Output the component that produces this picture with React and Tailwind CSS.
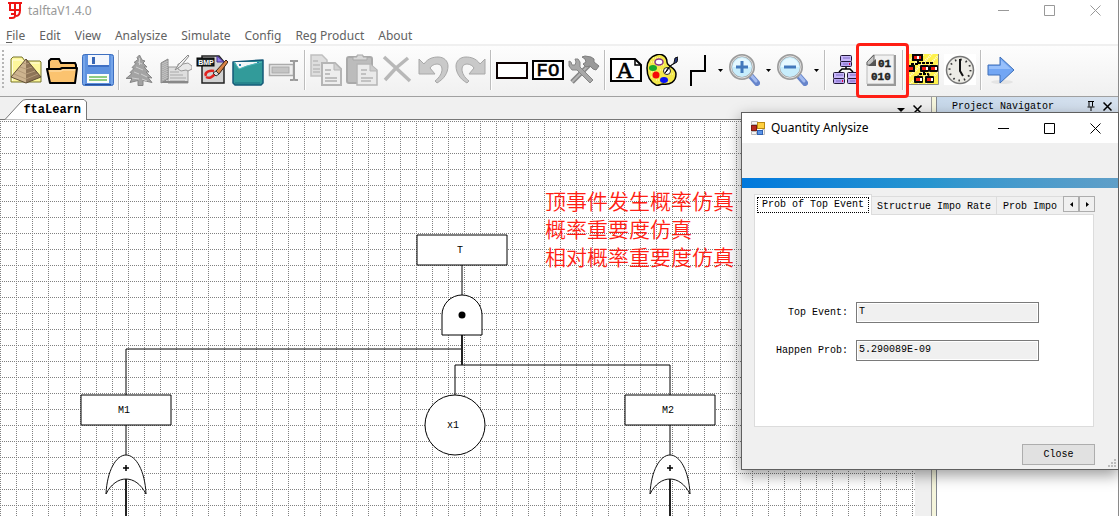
import React from "react";

const MONO = "font-['Liberation_Mono','DejaVu_Sans_Mono',monospace]";

function Icon({ children }) {
  return (
    <svg viewBox="0 0 32 32" className="block h-8 w-8 shrink-0" aria-hidden="true">
      {children}
    </svg>
  );
}

function PyramidFolder() {
  return (
    <Icon>
      <path d="M1 28V5l2-2h9l3 4h15l1 1v20z" fill="#fdf79b" stroke="#77752b" />
      <path d="M2.500 27V6h9l3 3h15" fill="none" stroke="#fffde0" />
      <path d="M16 5L1 23l15 6z" fill="#cdb48f" />
      <path d="M16 5l15 18-15 6z" fill="#8e7558" />
      <path d="M13 9l3 1 4-1M10 13l6 2 6-2M7 16l9 4 9-3M4 20l12 5 12-5" fill="none" stroke="#b49a78" />
      <path d="M16 5L1 23l15 6 15-6z" fill="none" stroke="#5f4c34" />
    </Icon>
  );
}

function OpenFolder() {
  return (
    <Icon>
      <path d="M3 14V7l2-2h8l2 4h14l1 2v4" fill="#fbc36f" stroke="#000" strokeWidth="2" />
      <path d="M1 15h13l2-1h15l-2 15H4z" fill="#fbc36f" stroke="#000" strokeWidth="2" strokeLinejoin="round" />
      <path d="M3 17h12l2-1h12" fill="none" stroke="#ffe3b3" />
    </Icon>
  );
}

function SaveDisk() {
  return (
    <Icon>
      <rect x="0.5" y="0.5" width="31" height="31" rx="2" fill="#5f93e0" stroke="#3d6fc0" />
      <path d="M2 2v28M30 2v28" stroke="#8db7f2" />
      <path d="M6 1h21v10H6z" fill="#f4f7fc" />
      <path d="M10 3h3v7h-3z" fill="#3766b5" />
      <path d="M6 11h21v2H6z" fill="#3f70c4" />
      <path d="M5 20h22v9H5z" fill="#fbfdfb" />
      <path d="M7 22h18v2H7zM7 25h18v2H7z" fill="#8fcd82" />
      <path d="M3 30h26v1H3z" fill="#274f9a" />
    </Icon>
  );
}

function PineTree() {
  return (
    <Icon>
      <path d="M15.500 1l2.500 5 3 1-2 2 4 4h-3l5 5h-3l6 6-4-.5 4 5-9-2v5h-5v-5l-8 2 2-4-6 0 6-5-2-1 4-4-2-1 4-4-2-1 4-3-1-2z" fill="#a3a3a3" stroke="#868686" strokeWidth="1" />
      <path d="M14 8l4 2M12 13l7 3M10 18l5 2M17 20l6 3M8 24l7 1M18 25l5 2M15.500 4v7" stroke="#cfcfcf" fill="none" />
    </Icon>
  );
}

function Notebook() {
  return (
    <Icon>
      <path d="M8 13h18l2 3v13H8z" fill="#dedede" stroke="#999" />
      <path d="M10 18h9M10 21h13M10 24h16M10 27h15" stroke="#a8a8a8" />
      <path d="M2 28h26" stroke="#888" strokeWidth="2" />
      <path d="M1 9l7-4v20l-7 4z" fill="#adadad" stroke="#888" />
      <path d="M3 9v18M5 8v18M7 7v18" stroke="#cfcfcf" strokeDasharray="1 1" />
      <path d="M18 10l5 0 5-1 4 3v3l-4 2-2-1-5 1-3-2z" fill="#e8e8e8" stroke="#999" />
      <path d="M15 16l4-6 9-9 1 1-8 10z" fill="#f0f0f0" stroke="#8b8b8b" />
    </Icon>
  );
}

function BitmapDoc() {
  return (
    <Icon>
      <path d="M6 2h17l5 6v21H6z" fill="#d2d2d2" stroke="#222" strokeWidth="1.500" />
      <path d="M21 2v6h7z" fill="#8f78e8" stroke="#45308d" />
      <rect x="1" y="4" width="17" height="8" fill="#1a2222" stroke="#000" />
      <text x="10" y="11" textAnchor="middle" fontSize="7" fontWeight="700" fill="#fff" fontFamily="Liberation Sans, sans-serif">BMP</text>
      <path d="M10 22c-2-4 4-6 8-5M10 23c4 2 6 0 9-3" fill="none" stroke="#e02420" strokeWidth="2.500" />
      <path d="M20 17L30 6l2 2-9 12z" fill="#d98446" stroke="#3c2112" />
      <path d="M17 19l3-2 3 3-3 2z" fill="#ddd" stroke="#333" />
    </Icon>
  );
}

function Envelope() {
  return (
    <Icon>
      <path d="M1 8l30-2v23l-2 2H3l-2-2z" fill="#329b9a" stroke="#155a78" strokeWidth="1.500" strokeLinejoin="round" />
      <path d="M3 8h26L14 12l-7 3z" fill="#f2f6f7" />
      <path d="M2 8l5 7 8-3 15-4" fill="none" stroke="#4fb6ba" />
      <path d="M7 10h2v2H7zM25 8h2v1h-2z" fill="#287fad" />
      <path d="M3 29h25" stroke="#1c6e81" />
    </Icon>
  );
}

function RenameField() {
  return (
    <Icon>
      <rect x="1.500" y="10.500" width="24" height="11" fill="#ededed" stroke="#ababab" strokeWidth="1.500" />
      <rect x="4" y="13" width="17" height="6" fill="#c4c4c4" stroke="#aaa" />
      <path d="M22 7h3l1 1 1-1h3M26 8v17M22 26h3l1-1 1 1h3" fill="none" stroke="#9c9c9c" strokeWidth="2" />
    </Icon>
  );
}

function CopyPages() {
  return (
    <Icon>
      <path d="M1 1h11l5 5v16H1z" fill="#dedede" stroke="#c0c0c0" strokeWidth="1.500" />
      <path d="M3 7h5M3 11h7M3 15h7M3 18h7" stroke="#bcbcbc" strokeWidth="1.500" />
      <path d="M12 9h13l6 6v16H12z" fill="#eee" stroke="#b5b5b5" strokeWidth="2" />
      <path d="M24 9v7h7" fill="#d2d2d2" stroke="#b5b5b5" />
      <path d="M15 16h6M15 20h5M15 24h12M15 27h12" stroke="#b0b0b0" strokeWidth="1.500" />
    </Icon>
  );
}

function PastePage() {
  return (
    <Icon>
      <rect x="1" y="3" width="25" height="26" rx="2" fill="#bcbcbc" stroke="#a9a9a9" strokeWidth="2" />
      <path d="M7 5V3h4V1h6v2h4v3H7z" fill="#d8d8d8" stroke="#a8a8a8" />
      <path d="M11 10h13l7 6v15H11z" fill="#eaeaea" stroke="#b5b5b5" strokeWidth="1.500" />
      <path d="M24 10v7h7" fill="#ccc" stroke="#b7b7b7" />
      <path d="M15 16h6M15 20h5M15 24h12M15 27h10" stroke="#b5b5b5" strokeWidth="1.500" />
    </Icon>
  );
}

function DeleteCross() {
  return (
    <Icon>
      <path d="M2 3l12 11L26 4M3 26l11-12 14 13" fill="none" stroke="#b8b8b8" strokeWidth="3.500" />
    </Icon>
  );
}

const CURVE = "M1 5l5 5C10 4 16 3 20 3c6 0 10 4 10 9 0 7-4 13-11 17l-2-2c5-4 7-8 7-12 0-3-2-5-5-5-3 0-6 2-7 4l5 6H1z";

function Undo() {
  return (
    <Icon>
      <path d={CURVE} fill="#c9c9c9" stroke="#a8a8a8" strokeLinejoin="round" />
    </Icon>
  );
}

function Redo() {
  return (
    <Icon>
      <path d={CURVE} transform="matrix(-1 0 0 1 32 0)" fill="#c9c9c9" stroke="#a8a8a8" strokeLinejoin="round" />
    </Icon>
  );
}

function BoxShape() {
  return (
    <Icon>
      <rect x="1" y="9" width="30" height="15" fill="#fff" stroke="#0b0000" strokeWidth="2" />
    </Icon>
  );
}

function FieldCode() {
  return (
    <Icon>
      <rect x="1" y="7" width="30" height="18" fill="#fff" stroke="#000" strokeWidth="2" />
      <text x="16" y="22" textAnchor="middle" fontSize="19" stroke="#000" strokeWidth="0.6" fontFamily="Liberation Mono, monospace">FO</text>
    </Icon>
  );
}

function Tools() {
  return (
    <Icon>
      <path d="M4 28L21 11" stroke="#858585" strokeWidth="5" />
      <path d="M4 28L21 11" stroke="#b5b5b5" strokeWidth="2" />
      <path d="M14 3l3-1 6 1 3 2v3l5 4-3 4-3-1-3-3-4 1-3-3 3-2-1-3z" fill="#999" stroke="#7e7e7e" />
      <path d="M1 7l2 1 1 3h3l1-3-1-3h3l2 3v5l13 13-3 3L9 16H4l-3-4z" fill="#a8a8a8" stroke="#868686" />
    </Icon>
  );
}

function TextLabel() {
  return (
    <Icon>
      <path d="M1 5h24l6 6v16H1z" fill="#fff" stroke="#000" strokeWidth="2" />
      <path d="M25 5v6h6" fill="none" stroke="#000" strokeWidth="1.500" />
      <text x="15" y="24" textAnchor="middle" fontSize="24" stroke="#000" strokeWidth="0.7" fontFamily="Liberation Serif, serif">A</text>
    </Icon>
  );
}

function Palette() {
  return (
    <Icon>
      <path d="M10 1c5-2 11 1 11 7 0 5 9 5 9 12 0 8-6 11-13 10-3 0-4 2-7 1C4 28 1 21 1 14S4 3 10 1z" fill="#f3e84b" stroke="#000" strokeWidth="1.500" />
      <path d="M7 4h7M5 8h4M11 11h8M5 18h4M14 16h5M20 20h7M5 23h4M10 26h3M16 28h7" stroke="#fffbd0" strokeDasharray="1 1" />
      <ellipse cx="13" cy="8" rx="4" ry="3" fill="#fff" stroke="#87338d" strokeWidth="1.500" />
      <ellipse cx="7" cy="14" rx="4" ry="3" fill="#18a92a" />
      <circle cx="10" cy="21" r="3.500" fill="#f50808" />
      <ellipse cx="18" cy="26" rx="4" ry="3" fill="#0712f5" />
      <circle cx="21" cy="17" r="3.500" fill="#fff" stroke="#222" />
      <path d="M19 19l3-5 6-5 1-5 3-1-1 5-7 4-3 5z" fill="#28387d" stroke="#111" />
    </Icon>
  );
}

function StepLine() {
  return (
    <Icon>
      <path d="M10 32V17h14V1" fill="none" stroke="#000" strokeWidth="2" />
    </Icon>
  );
}

function Magnifier({ plus }) {
  return (
    <Icon>
      <path d="M22 21l7 8" stroke="#6785cb" strokeWidth="6" strokeLinecap="round" />
      <path d="M22 20l6 7" stroke="#a3bbef" strokeWidth="3" strokeLinecap="round" />
      <circle cx="14" cy="13" r="11.500" fill="#c7edfc" stroke="#9c9c9c" strokeWidth="3" />
      <circle cx="14" cy="13" r="11" fill="none" stroke="#dedede" />
      <path d="M5 13a9 9 0 0 1 18 0z" fill="#e5f8ff" />
      <path d={plus ? "M8 13h12M14 7v12" : "M8 13h12"} stroke="#4279bc" strokeWidth="3" />
    </Icon>
  );
}

function Server({ x, y }) {
  return (
    <g transform={"translate(" + x + " " + y + ")"}>
      <rect x="0.5" y="0.5" width="11" height="6" rx="1" fill="#c8b7fa" stroke="#201737" />
      <rect x="0.5" y="6.500" width="11" height="5" rx="1" fill="#b9a5f3" stroke="#201737" />
      <path d="M3 3h7M3 9h5" stroke="#7e6bc4" />
      <path d="M9 8h1v2H9z" fill="#e00040" />
    </g>
  );
}

function ServerTree() {
  return (
    <Icon>
      <path d="M16 12v3M9 18l3-3h8l3 3" fill="none" stroke="#000" strokeWidth="1.500" />
      <Server x="10" y="1" />
      <Server x="3" y="18" />
      <Server x="17" y="18" />
    </Icon>
  );
}

function BinaryDoc() {
  return (
    <Icon>
      <path d="M7 1h21v29H1V8z" fill="#f1f1f1" stroke="#bbb" />
      <path d="M29 1v30H1" fill="none" stroke="#999" strokeWidth="2" />
      <path d="M8 1v10H1V8z" fill="#c5c5c5" stroke="#666" />
      <path d="M2 12h8V5z" fill="#555" />
      <g fontSize="11" fontWeight="700" fill="#222" stroke="#222" strokeWidth="0.4" fontFamily="Liberation Mono, monospace">
        <text x="12" y="13">01</text>
        <text x="5" y="26">010</text>
      </g>
    </Icon>
  );
}

function FaultBlock({ x, y }) {
  return (
    <g transform={"translate(" + x + " " + y + ")"}>
      <rect width="9" height="7" rx="1" fill="#080808" />
      <path d="M2 2h4v3H2z" fill="#f11d10" />
      <path d="M6 2h2v3H6z" fill="#fff" />
    </g>
  );
}

function FaultMap() {
  return (
    <Icon>
      <rect x="1" y="0" width="29" height="31" fill="#fff24b" />
      <path d="M2 6L8 0M2 14L16 0M2 22L24 0M2 30L30 2M10 30L30 10M18 30l12-12" stroke="#fffbe4" strokeDasharray="1 1" strokeWidth="2" />
      <path d="M10 6v4H4v3M10 9h14v3M16 17v3M9 24l3-4h8l2 4" stroke="#000" strokeDasharray="3 1" strokeWidth="2" fill="none" />
      <path d="M4 0h11v7H4z" fill="#080808" />
      <path d="M6 2h7v3H6z" fill="#f11d10" />
      <path d="M9 2h2v3H9z" fill="#fff" />
      <path d="M1 11h6v7H1z" fill="#080808" />
      <path d="M1 13h4v3H1z" fill="#f11d10" />
      <FaultBlock x="12" y="11" />
      <FaultBlock x="21" y="11" />
      <FaultBlock x="6" y="22" />
      <FaultBlock x="17" y="22" />
      <path d="M30.500 0v30.500H1" fill="none" stroke="#888" />
    </Icon>
  );
}

function Clock() {
  return (
    <Icon>
      <rect width="32" height="31" fill="#fff" />
      <circle cx="16" cy="16" r="13.500" fill="#ecebe5" stroke="#777" strokeWidth="1.500" />
      <circle cx="16" cy="16" r="10.500" fill="none" stroke="#333" strokeWidth="2" strokeDasharray="1.500 4" />
      <path d="M16 5v12l3 5" fill="none" stroke="#111" strokeWidth="2" />
    </Icon>
  );
}

function BlueArrow() {
  return (
    <Icon>
      <ellipse cx="16" cy="28" rx="11" ry="2" fill="#e4e4e4" />
      <path d="M2 11h12V3l14 13-14 13v-8H2z" fill="#72a6f4" stroke="#3e6fb7" strokeLinejoin="round" />
      <path d="M3 12h12V6l10 9H3z" fill="#98c0fb" />
    </Icon>
  );
}

function Tool({ label, narrow, children }) {
  return (
    <button type="button" aria-label={label} className={"flex h-9 shrink-0 items-center justify-center " + (narrow ? "w-[34px]" : "w-9")}>
      {children}
    </button>
  );
}

function Drop({ label }) {
  return (
    <button type="button" aria-label={label} className="flex h-9 w-3 shrink-0 items-center justify-center">
      <svg width="5" height="3" viewBox="0 0 5 3" aria-hidden="true"><path d="M0 0h5L2.500 3z" /></svg>
    </button>
  );
}

function Separator() {
  return <span className="mx-[2px] h-10 w-[2px] shrink-0 border-l border-[#bdbdbd] bg-white" />;
}

function Toolbar() {
  return (
    <div role="toolbar" aria-label="Tools" className="flex h-[53px] shrink-0 items-center border-t-2 border-b border-t-[#f0f0f0] border-b-[#a0a0a0] bg-gradient-to-b from-[#fdfdfd] to-[#f0f0f0] pb-[2px] pl-[2px]">
      <span className="mr-1 h-10 w-[2px] shrink-0 bg-[repeating-linear-gradient(to_bottom,#b5b5b5_0px,#b5b5b5_2px,transparent_2px,transparent_4px)]" />
      <Tool label="New project"><PyramidFolder /></Tool>
      <Tool label="Open"><OpenFolder /></Tool>
      <Tool label="Save"><SaveDisk /></Tool>
      <Separator />
      <Tool label="Tree"><PineTree /></Tool>
      <Tool label="Notes"><Notebook /></Tool>
      <Tool label="Export bitmap"><BitmapDoc /></Tool>
      <Tool label="Report"><Envelope /></Tool>
      <Tool label="Rename"><RenameField /></Tool>
      <Separator />
      <Tool label="Copy"><CopyPages /></Tool>
      <Tool label="Paste"><PastePage /></Tool>
      <Tool label="Delete"><DeleteCross /></Tool>
      <Tool label="Undo"><Undo /></Tool>
      <Tool label="Redo"><Redo /></Tool>
      <Separator />
      <Tool label="Box"><BoxShape /></Tool>
      <Tool label="Code"><FieldCode /></Tool>
      <Tool label="Settings"><Tools /></Tool>
      <Separator />
      <Tool label="Text"><TextLabel /></Tool>
      <Tool label="Colors"><Palette /></Tool>
      <Tool label="Line style" narrow><StepLine /></Tool>
      <Drop label="Line style options" />
      <Tool label="Zoom in"><Magnifier plus /></Tool>
      <Drop label="Zoom in options" />
      <Tool label="Zoom out"><Magnifier /></Tool>
      <Drop label="Zoom out options" />
      <Separator />
      <Tool label="Structure"><ServerTree /></Tool>
      <div className="relative">
        <Tool label="Quantity"><BinaryDoc /></Tool>
        <span className="pointer-events-none absolute -top-[9px] -left-[8px] z-10 h-[55px] w-[53px] rounded-[4px] border-[3px] border-[#ff1e14]" />
      </div>
      <Separator />
      <Tool label="Fault map"><FaultMap /></Tool>
      <Tool label="Time"><Clock /></Tool>
      <Separator />
      <Tool label="Next"><BlueArrow /></Tool>
    </div>
  );
}

function WindowButtons() {
  const cls = "flex w-[46px] items-center justify-center";
  return (
    <div className="ml-auto flex self-stretch">
      <button type="button" aria-label="Minimize" className={cls}>
        <svg width="11" height="11" viewBox="0 0 11 11"><path d="M0 5.500h11" stroke="currentColor" /></svg>
      </button>
      <button type="button" aria-label="Maximize" className={cls}>
        <svg width="11" height="11" viewBox="0 0 11 11"><path d="M.5.5h10v10H.5z" fill="none" stroke="currentColor" /></svg>
      </button>
      <button type="button" aria-label="Close window" className={cls}>
        <svg width="11" height="11" viewBox="0 0 11 11"><path d="M.5.5l10 10M10.500.5l-10 10" stroke="currentColor" /></svg>
      </button>
    </div>
  );
}

function Cross() {
  return (
    <svg width="9" height="9" viewBox="0 0 9 9" aria-hidden="true"><path d="M.5.5l8 8M8.500.5l-8 8" stroke="#000" strokeWidth="1.500" /></svg>
  );
}

function OrGate({ x }) {
  return (
    <g transform={"translate(" + x + " 455)"}>
      <path d="M0 24v60" stroke="#222" strokeWidth="2" />
      <path d="M-20 39C-19 16-10 0 0 0s19 16 20 39C10 19-10 19-20 39z" fill="#fff" stroke="#111" />
      <path d="M-3 13h6M0 10v6" stroke="#000" strokeWidth="1.500" />
    </g>
  );
}

function Diagram() {
  return (
    <svg className="block h-full w-full bg-white" aria-label="Fault tree">
      <defs>
        <pattern id="grid" width="16" height="16" patternUnits="userSpaceOnUse" y="1">
          <path d="M0 .5h16M.5 0v16" stroke="#808080" strokeDasharray="1 1" fill="none" />
        </pattern>
      </defs>
      <rect width="100%" height="100%" fill="url(#grid)" />
      <g transform="translate(0 -120)">
        <g fill="none" stroke="#000">
          <path d="M462 265v30M462 349H126V395M126 425v30M455 395V365H670V395M670 425v30" />
          <path d="M462 335v30" strokeWidth="2" stroke="#222" />
        </g>
        <g fill="#fff" stroke="#000">
          <path d="M417 235h90v30h-90zM81 395h90v30h-90zM625 395h90v30h-90z" />
          <path d="M442 335V315a20 20 0 0 1 40 0V335z" />
          <circle cx="455" cy="425" r="30" />
        </g>
        <circle cx="462" cy="315" r="3.500" />
        <OrGate x="126" />
        <OrGate x="670" />
        <g textAnchor="middle" fontSize="10" stroke="none" className={MONO}>
          <text x="460" y="253">T</text>
          <text x="124" y="413">M1</text>
          <text x="668" y="413">M2</text>
          <text x="453" y="428">x1</text>
        </g>
      </g>
    </svg>
  );
}

function Field({ id, label, value }) {
  return (
    <>
      <label htmlFor={id} className="self-center text-right leading-3">{label}</label>
      <input id={id} readOnly defaultValue={value} className="h-[21px] w-full border border-[#7a7a7a] bg-[#f0f0f0] px-[2px] pb-[2px] leading-3 text-black shadow-[inset_0_0_0_1px_#fff] outline-none" />
    </>
  );
}

function QuantityDialog() {
  return (
    <section role="dialog" aria-label="Quantity Anlysize" className="absolute top-[112px] right-0 z-20 w-[378px] border border-[#5f5f5f] bg-[#f0f0f0] shadow-[0_5px_14px_rgba(0,0,0,0.4)]">
      <header className="flex h-[30px] items-center bg-white pl-[9px]">
        <svg width="14" height="14" viewBox="0 0 14 14" aria-hidden="true">
          <path d="M.5.5h6v3h-6zM.5 10.500h5v3h-5zM11.500 8.500h2v5h-2z" fill="#f4f4f4" stroke="#b9b9b9" />
          <rect x="0.5" y="4.500" width="5" height="5" fill="#b82b20" stroke="#7d1c14" />
          <rect x="6.500" y="1.500" width="7" height="6" fill="#ffd03e" stroke="#b98913" />
          <rect x="6.500" y="9.500" width="5" height="4" fill="#5b94e8" stroke="#2f62b3" />
        </svg>
        <h2 className="ml-[6px] text-xs">Quantity Anlysize</h2>
        <WindowButtons />
      </header>
      <div className="h-[35px]" />
      <div className="h-[10px] bg-gradient-to-r from-[#0078dc] via-[#2795cf] to-[#5f9fc8]" />
      <div className={"pt-[6px] pr-[23px] pb-1 pl-3 text-[10px] leading-3 " + MONO}>
        <div role="tablist" className="relative -mb-px flex h-[21px] items-end">
          <button type="button" role="tab" aria-selected="true" className="z-10 h-[21px] shrink-0 border border-b-0 border-[#dcdcdc] bg-white p-[2px]">
            <span className="flex h-4 items-center border border-dotted border-black px-1">Prob of Top Event</span>
          </button>
          <button type="button" role="tab" aria-selected="false" className="h-[19px] shrink-0 border-t border-r border-[#dcdcdc] px-[5px] pt-[2px]">Structrue Impo Rate</button>
          <button type="button" role="tab" aria-selected="false" className="h-[19px] min-w-0 flex-1 overflow-hidden border-t border-[#dcdcdc] pt-[2px] pl-[6px] text-left whitespace-nowrap">Prob Impo</button>
          <button type="button" aria-label="Previous tab" className="mb-[3px] flex h-4 w-4 shrink-0 items-center justify-center border border-[#adadad] bg-[#f0f0f0]">
            <svg width="3" height="5" viewBox="0 0 3 5"><path d="M3 0v5L0 2.500z" /></svg>
          </button>
          <button type="button" aria-label="Next tab" className="mb-[3px] flex h-4 w-4 shrink-0 items-center justify-center border border-[#adadad] bg-[#f0f0f0]">
            <svg width="3" height="5" viewBox="0 0 3 5"><path d="M0 0v5l3-2.500z" /></svg>
          </button>
        </div>
        <div role="tabpanel" className="mr-px grid grid-cols-[93px_183px] gap-x-2 gap-y-[17px] border border-[#dcdcdc] bg-white pt-[87px] pb-[65px]">
          <Field id="top-event" label="Top Event:" value="T" />
          <Field id="happen-prob" label="Happen Prob:" value="5.290089E-09" />
        </div>
        <div className="mt-[17px] flex justify-end">
          <button type="button" className="h-[21px] w-[73px] border border-[#adadad] bg-[#e1e1e1]">Close</button>
        </div>
      </div>
      <svg width="8" height="8" viewBox="0 0 8 8" className="absolute right-[2px] bottom-[2px]" aria-hidden="true">
        <path d="M6 0h2v2H6zM3 3h2v2H3zM6 3h2v2H6zM0 6h2v2H0zM3 6h2v2H3zM6 6h2v2H6z" fill="#bdbdbd" />
      </svg>
    </section>
  );
}

export default function App() {
  const menus = ["Edit", "View", "Analysize", "Simulate", "Config", "Reg Product", "About"];
  return (
    <div className="relative h-screen overflow-hidden font-['Noto_Sans','Open_Sans',sans-serif] text-black">
      <div className="flex h-full flex-col border-r border-[#8a8a8a] bg-white">
        <header className="flex h-[21px] shrink-0 items-center pl-2 text-[#999999]">
          <svg width="14" height="17" viewBox="0 0 14 17" aria-hidden="true">
            <path d="M0 1h14M2 1v7h10V1M7 1v13q0 2-3 2H1M12 8q0 6-4 6M3 12h5" fill="none" stroke="#ee1515" strokeWidth="2" />
          </svg>
          <h1 className="ml-[6px] text-xs">talftaV1.4.0</h1>
          <WindowButtons />
        </header>
        <nav className="flex h-[23px] shrink-0 items-center gap-[14px] pt-[6px] pl-[6px] text-xs text-[#626262]">
          <button type="button"><span className="underline underline-offset-2">F</span>ile</button>
          {menus.map((m) => <button type="button" key={m}>{m}</button>)}
        </nav>
        <Toolbar />
        <div className="flex min-h-0 flex-1">
          <main className="flex min-w-0 flex-1 flex-col border-r border-[#9a9a9a] bg-[#f0f0f0]">
            <div className="flex h-[23px] shrink-0 items-end border-b border-[#777777]">
              <button type="button" className="relative -mb-px ml-[5px] h-[21px] w-[82px]">
                <svg width="82" height="21" viewBox="0 0 82 21" className="block" aria-hidden="true">
                  <path d="M0 20.500L16 3q2-2.500 5-2.500h58l2.500 2.500V21" fill="#fff" stroke="#777" />
                </svg>
                <span className="absolute inset-0 flex items-center justify-end pr-[6px] font-['Liberation_Mono',monospace] text-xs font-bold">ftaLearn</span>
              </button>
              <div className="ml-auto flex items-center gap-2 pr-[9px] pb-[5px]">
                <button type="button" aria-label="Tab list"><svg width="8" height="4" viewBox="0 0 8 4"><path d="M0 0h8L4 4z" /></svg></button>
                <button type="button" aria-label="Close tab"><Cross /></button>
              </div>
            </div>
            <div className="relative min-h-0 flex-1 pr-4">
              <Diagram />
              <p className="absolute top-[66px] left-[545px] font-['Noto_Sans_CJK_SC',sans-serif] text-[21px] leading-7 font-[350] whitespace-nowrap text-[#ff1e14]">
                顶事件发生概率仿真<br />概率重要度仿真<br />相对概率重要度仿真
              </p>
            </div>
          </main>
          <div className="w-1 shrink-0 bg-[#f5f5dc]" />
          <aside className="w-[182px] shrink-0 border-l border-[#828790] bg-white">
            <div className="flex h-[18px] items-center bg-gradient-to-r from-[#c8d9eb] to-[#d6e1ee] pr-[6px] pl-[15px]">
              <h2 className={"text-[10px] " + MONO}>Project Navigator</h2>
              <button type="button" aria-label="Pin" className="ml-auto">
                <svg width="8" height="10" viewBox="0 0 8 10"><path d="M1 .5h6M2 .5v5M5.500 .5v5M.5 6h7M4 6v4" fill="none" stroke="#000" /></svg>
              </button>
              <button type="button" aria-label="Close navigator" className="ml-2"><Cross /></button>
            </div>
          </aside>
        </div>
      </div>
      <QuantityDialog />
    </div>
  );
}
